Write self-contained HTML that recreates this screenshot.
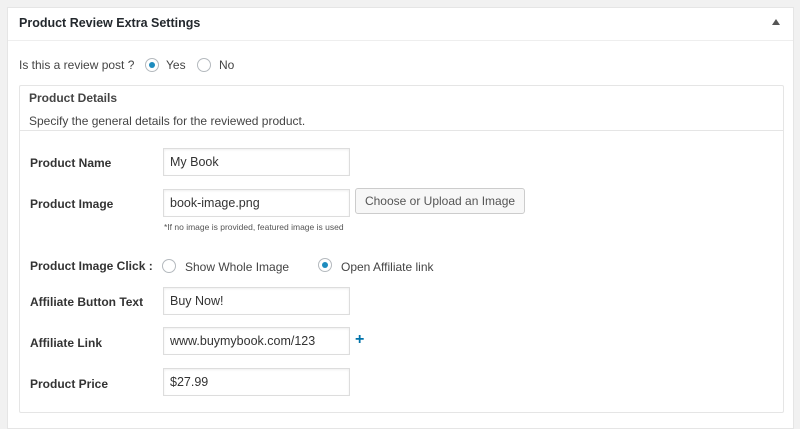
<!DOCTYPE html>
<html><head><style>
body{margin:0;width:800px;height:419px;background:#f1f1f1;font-family:"Liberation Sans",sans-serif;color:#444;position:relative;overflow:hidden}
.a{position:absolute}
.panel{left:7px;top:7px;width:785px;height:420px;background:#fff;border:1px solid #e5e5e5}
.hd{left:8px;top:8px;width:785px;height:32px;border-bottom:1px solid #eee}
.inner{left:19px;top:85px;width:763px;height:326px;border:1px solid #e5e5e5;border-radius:2px}
.lbl{font-size:12px;font-weight:bold;color:#333;left:30px}
.inp{left:163px;border:1px solid #ddd;box-shadow:inset 0 1px 2px rgba(0,0,0,.07);font-size:12.5px;color:#333;line-height:26px;padding-left:6px;box-sizing:border-box;width:187px;height:28px}
.rad{width:14px;height:14px;border:1px solid #b4b9be;border-radius:50%;box-sizing:border-box;background:#fff}
.rad.on::after{content:"";position:absolute;left:3px;top:3px;width:6px;height:6px;border-radius:50%;background:#1e8cbe}
.t{font-size:12px;color:#444}
</style></head><body>
<div class="a panel"></div>
<div class="a hd"></div>
<div class="a" style="left:19px;top:16px;font-size:12.5px;font-weight:bold;color:#23282d">Product Review Extra Settings</div>
<div class="a" style="left:772px;top:19px;width:0;height:0;border-left:4px solid transparent;border-right:4px solid transparent;border-bottom:6px solid #555"></div>
<div class="a t" style="left:19px;top:58px">Is this a review post ?</div>
<div class="a rad on" style="left:145px;top:58px"></div>
<div class="a t" style="left:166px;top:58px">Yes</div>
<div class="a rad" style="left:197px;top:58px"></div>
<div class="a t" style="left:219px;top:58px">No</div>
<div class="a inner"></div>
<div class="a" style="left:20px;top:130px;width:763px;border-top:1px solid #e5e5e5"></div>
<div class="a" style="left:29px;top:91px;font-size:12px;font-weight:bold;color:#444">Product Details</div>
<div class="a t" style="left:29px;top:114px">Specify the general details for the reviewed product.</div>
<div class="a lbl" style="top:156px">Product Name</div>
<div class="a inp" style="top:148px">My Book</div>
<div class="a lbl" style="top:197px">Product Image</div>
<div class="a inp" style="top:189px">book-image.png</div>
<div class="a" style="left:355px;top:188px;width:170px;height:26px;border:1px solid #ccc;border-radius:3px;background:#f7f7f7;box-sizing:border-box;font-size:12px;color:#555;text-align:center;line-height:24px">Choose or Upload an Image</div>
<div class="a" style="left:164px;top:222px;font-size:8.5px;color:#555">*If no image is provided, featured image is used</div>
<div class="a lbl" style="top:259px">Product Image Click :</div>
<div class="a rad" style="left:162px;top:259px"></div>
<div class="a t" style="left:185px;top:260px">Show Whole Image</div>
<div class="a rad on" style="left:318px;top:258px"></div>
<div class="a t" style="left:341px;top:260px">Open Affiliate link</div>
<div class="a lbl" style="top:295px">Affiliate Button Text</div>
<div class="a inp" style="top:287px">Buy Now!</div>
<div class="a lbl" style="top:336px">Affiliate Link</div>
<div class="a inp" style="top:327px">www.buymybook.com/123</div>
<div class="a" style="left:355px;top:331px;font-size:16px;font-weight:bold;color:#0073aa">+</div>
<div class="a lbl" style="top:377px">Product Price</div>
<div class="a inp" style="top:368px">$27.99</div>
</body></html>
